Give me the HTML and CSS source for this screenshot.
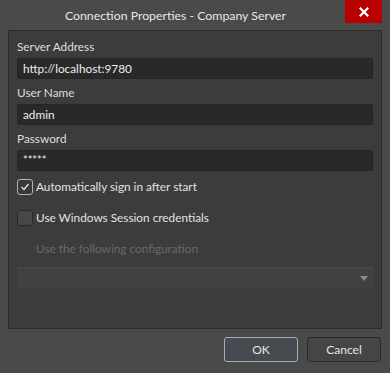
FILE: index.html
```html
<!DOCTYPE html>
<html lang="en">
<head>
    <meta charset="UTF-8">
    <meta name="viewport" content="width=device-width, initial-scale=1.0">
    <title>Connection Properties - Company Server</title>
    <link rel="stylesheet" href="styles.css">
</head>
<body>
    <div class="window">
        <div class="titlebar">
            <div class="title">Connection Properties - Company Server</div>
            <button class="close" type="button">
                <svg width="10" height="10" viewBox="0 0 10 10"><path d="M1.5 1.5 L8.5 8.5 M8.5 1.5 L1.5 8.5" stroke="#fff" stroke-width="2.2" stroke-linecap="square"/></svg>
            </button>
        </div>

        <div class="panel">
            <div class="field">
                <label for="server">Server Address</label>
                <input type="text" id="server" value="http://localhost:9780">
            </div>
            <div class="field">
                <label for="user">User Name</label>
                <input type="text" id="user" value="admin">
            </div>
            <div class="field">
                <label for="pass">Password</label>
                <input type="text" id="pass" class="stars" value="*****">
            </div>

            <div class="checks">
                <div class="check">
                    <span class="box checked">
                        <svg width="12" height="12" viewBox="0 0 12 12"><path d="M2.5 6 L5 8.5 L9.5 3" fill="none" stroke="#dfe6ee" stroke-width="1.3"/></svg>
                    </span>
                    <span>Automatically sign in after start</span>
                </div>
                <div class="check">
                    <span class="box"></span>
                    <span>Use Windows Session credentials</span>
                </div>
                <div class="check disabled">
                    <span class="box"></span>
                    <span>Use the following configuration</span>
                </div>
            </div>

            <div class="combo">
                <svg width="8" height="5" viewBox="0 0 8 5"><path d="M0 0 H8 L4 5 Z" fill="#8a8a8a"/></svg>
            </div>
        </div>

        <div class="footer">
            <button class="btn default" type="button">OK</button>
            <button class="btn" type="button">Cancel</button>
        </div>
    </div>
</body>
</html>
```

FILE: styles.css
```css
body {
    margin: 0;
    background-color: #4a4a4a;
    font-family: Lato, "Noto Sans", sans-serif;
    font-size: 11.8px;
    color: #e2e2e2;
}
.window {
    width: 390px;
    height: 373px;
    display: flex;
    flex-direction: column;
}
.titlebar {
    height: 30px;
    display: flex;
    align-items: flex-start;
}
.title {
    flex: 1;
    text-align: center;
    font-size: 12.3px;
    line-height: 31px;
    color: #e6e6e6;
    padding-left: 6px;
}
.close {
    width: 37px;
    height: 23px;
    margin-right: 8px;
    background: #b80000;
    border: none;
    display: flex;
    align-items: center;
    justify-content: center;
    padding: 0;
}

.panel {
    margin: 0 8px;
    height: 299px;
    background: #3c3c3c;
    border: 1px solid #2c2c2c;
    padding: 6px 8px 0 8px;
    box-sizing: border-box;
}
.field label {
    display: block;
    height: 20px;
    line-height: 20px;
    color: #dedede;
    margin-bottom: 1px;
}
.field input {
    display: block;
    width: 100%;
    height: 21px;
    box-sizing: border-box;
    background: #292929;
    border: 1px solid #262626;
    border-radius: 2px;
    color: #ececec;
    font-family: inherit;
    font-size: 11.8px;
    padding: 0 5px;
    margin-bottom: 4px;
    outline: none;
}
.field input.stars {
    font-size: 11px;
    padding-bottom: 2px;
}

.checks {
    margin-top: 7px;
    display: flex;
    flex-direction: column;
    gap: 14px;
}
.check {
    display: flex;
    align-items: center;
    gap: 3px;
    height: 17px;
}
.box {
    width: 14px;
    height: 14px;
    border: 1px solid #2a2a2a;
    border-radius: 3px;
    background: #474747;
    display: flex;
    align-items: center;
    justify-content: center;
}
.box.checked {
    background: #3a3a3a;
    border-color: #a9b6c4;
}
.check.disabled {
    color: #696969;
}
.check.disabled .box {
    background: #3c3c3c;
    border-color: #3c3c3c;
}

.combo {
    margin-top: 10px;
    height: 21px;
    background: #414141;
    border-top: 1px solid #4a4a4a;
    display: flex;
    align-items: center;
    justify-content: flex-end;
    padding-right: 5px;
}

.footer {
    display: flex;
    justify-content: flex-end;
    gap: 9px;
    padding: 8px 9px 0 0;
}
.btn {
    width: 74px;
    height: 25px;
    background: #454545;
    border: 1px solid #2a2a2a;
    border-radius: 3px;
    color: #e6e6e6;
    font-family: inherit;
    font-size: 12px;
}
.btn.default {
    border-color: #9fb0c2;
    background: #474a4e;
}
```
